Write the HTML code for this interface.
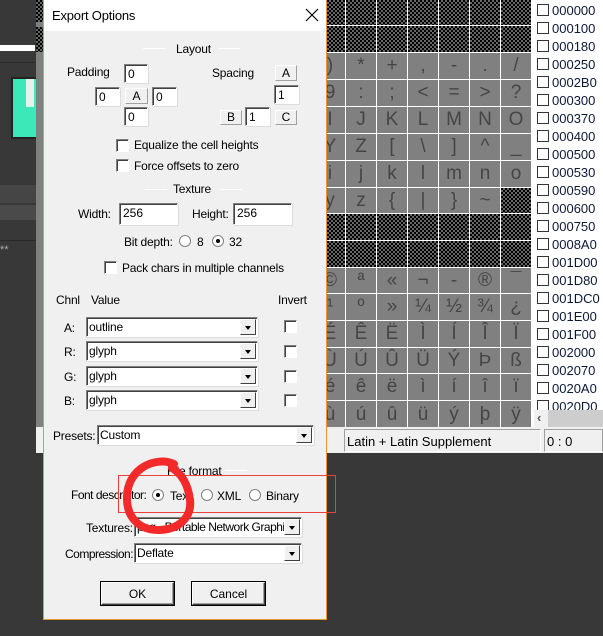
<!DOCTYPE html>
<html><head><meta charset="utf-8"><style>
*{margin:0;padding:0;box-sizing:border-box}
body{width:603px;height:636px;overflow:hidden;background:#383838;position:relative;font-family:"Liberation Sans",Arial,sans-serif;font-size:12px;color:#000}
.a{position:absolute}
.grid{position:absolute;left:315px;top:0;width:219px;height:427px;background:#fff;display:grid;grid-template-columns:repeat(7,30px);column-gap:1px;row-gap:1px;
grid-template-rows:25px 26px 26px 26px 26px 26px 26px 25px 26px 26px 25px 26px 26px 25px 26px 27px}
.grid div{background:#808080;color:#454545;font-size:19px;display:flex;align-items:center;justify-content:center}
.grid div.k,.k{background:#000 repeating-conic-gradient(#666 0 25%,#000 0 50%) 0 0/4px 4px!important}
.list div{position:absolute;left:537px;height:18px;color:#0c1838;font-size:13px}
.list div i{position:absolute;left:0;top:3px;width:12px;height:12px;background:#fff;border:1px solid #333}
.list div span{position:absolute;left:15px;top:2px;white-space:nowrap}
.dlg{position:absolute;left:43px;top:0;width:284px;height:620px;background:#f0f0f0;border:1px solid #e8962e;border-top:none}
.t{position:absolute;white-space:nowrap;letter-spacing:-0.2px}
.in{position:absolute;background:#fff;border:1px solid;border-color:#808080 #fff #fff #808080;box-shadow:inset 1px 1px #404040, 1px 1px #dcdcdc;padding:2px 0 0 3px;font-size:12px}
.lb{position:absolute;border:1px solid;border-color:#fff #a0a0a0 #a0a0a0 #fff;text-align:center;font-size:12px;line-height:13px}
.cb{position:absolute;width:13px;height:13px;background:#fff;border:1px solid;border-color:#808080 #fff #fff #808080;box-shadow:inset 1px 1px #404040}
.rd{position:absolute;width:12px;height:12px;border-radius:50%;background:#fff;border:1px solid #808080}
.rd.on::after{content:"";position:absolute;left:3px;top:3px;width:4px;height:4px;border-radius:50%;background:#000}
.cmb{position:absolute;background:#fff;border:1px solid;border-color:#808080 #fff #fff #808080;box-shadow:inset 1px 1px #404040,1px 1px #dcdcdc;padding:2px 0 0 2px;font-size:12px;overflow:hidden;white-space:nowrap;letter-spacing:-0.2px}
.cmb b{position:absolute;right:1px;top:1px;bottom:1px;width:16px;background:#f0f0f0;border:1px solid;border-color:#fff #404040 #404040 #fff}
.cmb b::after{content:"";position:absolute;left:4px;top:6px;border-left:3.5px solid transparent;border-right:3.5px solid transparent;border-top:4px solid #000}
.ln{position:absolute;height:1px;background:#a0a0a0;border-bottom:1px solid #fff}
.btn{position:absolute;background:#f0f0f0;border:1px solid;border-color:#fff #404040 #404040 #fff;box-shadow:inset -1px -1px #a0a0a0, 0 0 0 1px #000;text-align:center;line-height:22px;font-size:12px}
</style></head><body>
<div class="a" style="left:0;top:45px;width:35px;height:6px;background:#fff"></div>
<div class="a" style="left:0;top:62px;width:35px;height:1px;background:#2a2a2a"></div>
<div class="a" style="left:11px;top:77px;width:25px;height:62px;background:#222"></div>
<div class="a" style="left:13px;top:79px;width:23px;height:58px;background:#3de8b8"></div>
<div class="a" style="left:26px;top:79px;width:8px;height:28px;background:#e8f0ee"></div>
<div class="a" style="left:0;top:185px;width:36px;height:18px;background:#454545"></div>
<div class="a" style="left:0;top:205px;width:36px;height:15px;background:#4a4a4a"></div>
<div class="a" style="left:0;top:240px;width:36px;height:1px;background:#2a2a2a"></div>
<div class="a" style="left:0;top:244px;color:#aaa;font-size:11px">**</div>
<div class="a" style="left:36px;top:0;width:8px;height:453px;background:#808080"></div>
<div class="a k" style="left:36px;top:0;width:8px;height:22px"></div>
<div class="a k" style="left:36px;top:27px;width:8px;height:25px"></div>
<div class="a" style="left:36px;top:427px;width:8px;height:26px;background:#f0f0f0"></div>

<div class="grid">
<div class="k"></div><div class="k"></div><div class="k"></div><div class="k"></div><div class="k"></div><div class="k"></div><div class="k"></div>
<div class="k"></div><div class="k"></div><div class="k"></div><div class="k"></div><div class="k"></div><div class="k"></div><div class="k"></div>
<div>)</div><div>*</div><div>+</div><div>,</div><div>-</div><div>.</div><div>/</div>
<div>9</div><div>:</div><div>;</div><div>&lt;</div><div>=</div><div>&gt;</div><div>?</div>
<div>I</div><div>J</div><div>K</div><div>L</div><div>M</div><div>N</div><div>O</div>
<div>Y</div><div>Z</div><div>[</div><div>\</div><div>]</div><div>^</div><div>_</div>
<div>i</div><div>j</div><div>k</div><div>l</div><div>m</div><div>n</div><div>o</div>
<div>y</div><div>z</div><div>{</div><div>|</div><div>}</div><div>~</div><div class="k"></div>
<div class="k"></div><div class="k"></div><div class="k"></div><div class="k"></div><div class="k"></div><div class="k"></div><div class="k"></div>
<div class="k"></div><div class="k"></div><div class="k"></div><div class="k"></div><div class="k"></div><div class="k"></div><div class="k"></div>
<div>©</div><div>ª</div><div>«</div><div>¬</div><div>-</div><div>®</div><div>¯</div>
<div>¹</div><div>º</div><div>»</div><div>¼</div><div>½</div><div>¾</div><div>¿</div>
<div>É</div><div>Ê</div><div>Ë</div><div>Ì</div><div>Í</div><div>Î</div><div>Ï</div>
<div>Ù</div><div>Ú</div><div>Û</div><div>Ü</div><div>Ý</div><div>Þ</div><div>ß</div>
<div>é</div><div>ê</div><div>ë</div><div>ì</div><div>í</div><div>î</div><div>ï</div>
<div>ù</div><div>ú</div><div>û</div><div>ü</div><div>ý</div><div>þ</div><div>ÿ</div>
</div>
<div class="a" style="left:534px;top:0;width:69px;height:427px;background:#fff"></div>
<div class="list">
<div style="top:1px"><i></i><span>000000</span></div>
<div style="top:19px"><i></i><span>000100</span></div>
<div style="top:37px"><i></i><span>000180</span></div>
<div style="top:55px"><i></i><span>000250</span></div>
<div style="top:73px"><i></i><span>0002B0</span></div>
<div style="top:91px"><i></i><span>000300</span></div>
<div style="top:109px"><i></i><span>000370</span></div>
<div style="top:127px"><i></i><span>000400</span></div>
<div style="top:145px"><i></i><span>000500</span></div>
<div style="top:163px"><i></i><span>000530</span></div>
<div style="top:181px"><i></i><span>000590</span></div>
<div style="top:199px"><i></i><span>000600</span></div>
<div style="top:217px"><i></i><span>000750</span></div>
<div style="top:235px"><i></i><span>0008A0</span></div>
<div style="top:253px"><i></i><span>001D00</span></div>
<div style="top:271px"><i></i><span>001D80</span></div>
<div style="top:289px"><i></i><span>001DC0</span></div>
<div style="top:307px"><i></i><span>001E00</span></div>
<div style="top:325px"><i></i><span>001F00</span></div>
<div style="top:343px"><i></i><span>002000</span></div>
<div style="top:361px"><i></i><span>002070</span></div>
<div style="top:379px"><i></i><span>0020A0</span></div>
<div style="top:397px"><i></i><span>0020D0</span></div>
</div>
<div class="a" style="left:534px;top:410px;width:69px;height:17px;background:#f0f0f0"></div>
<div class="a" style="left:548px;top:410px;width:55px;height:17px;background:#cdcdcd"></div>
<div class="a" style="left:537px;top:410px;font-size:13px;color:#555;font-weight:bold">‹</div>
<div class="a" style="left:327px;top:427px;width:276px;height:26px;background:#f0f0f0"></div>
<div class="a" style="left:344px;top:429px;width:197px;height:23px;border:1px solid #a0a0a0;border-right-color:#fff;border-bottom-color:#fff;padding:4px 0 0 2px;font-size:13px">Latin + Latin Supplement</div>
<div class="a" style="left:544px;top:429px;width:59px;height:23px;border:1px solid #a0a0a0;border-bottom-color:#fff;padding:4px 0 0 2px;font-size:13px">0 : 0</div>

<div class="dlg">
 <div class="a" style="left:0;top:0;width:282px;height:31px;background:#fff"></div>
 <div class="t" style="left:8px;top:8px;font-size:13px">Export Options</div>
 <svg class="a" style="left:261px;top:8px" width="14" height="14"><path d="M1 1L13 13M13 1L1 13" stroke="#000" stroke-width="1.2"/></svg>
</div>
<div class="ln" style="left:143px;top:48px;width:22px"></div><div class="ln" style="left:218px;top:48px;width:22px"></div>
<div class="t" style="left:176px;top:42px">Layout</div>
<div class="t" style="left:67px;top:65px">Padding</div>
<div class="in" style="left:124px;top:64px;width:24px;height:19px">0</div>
<div class="in" style="left:95px;top:87px;width:25px;height:19px">0</div>
<div class="lb" style="left:125px;top:88px;width:23px;height:16px;line-height:14px">A</div>
<div class="in" style="left:152px;top:87px;width:25px;height:19px">0</div>
<div class="in" style="left:124px;top:107px;width:24px;height:19px">0</div>
<div class="t" style="left:212px;top:66px">Spacing</div>
<div class="lb" style="left:275px;top:65px;width:22px;height:16px;line-height:14px">A</div>
<div class="in" style="left:274px;top:85px;width:25px;height:19px">1</div>
<div class="lb" style="left:220px;top:110px;width:22px;height:15px">B</div>
<div class="in" style="left:245px;top:107px;width:25px;height:19px">1</div>
<div class="lb" style="left:275px;top:110px;width:22px;height:15px">C</div>
<div class="cb" style="left:116px;top:139px"></div><div class="t" style="left:134px;top:138px">Equalize the cell heights</div>
<div class="cb" style="left:116px;top:159px"></div><div class="t" style="left:134px;top:159px">Force offsets to zero</div>
<div class="ln" style="left:145px;top:189px;width:22px"></div><div class="ln" style="left:220px;top:189px;width:22px"></div>
<div class="t" style="left:173px;top:182px">Texture</div>
<div class="t" style="left:78px;top:207px">Width:</div>
<div class="in" style="left:119px;top:203px;width:59px;height:22px">256</div>
<div class="t" style="left:192px;top:207px">Height:</div>
<div class="in" style="left:233px;top:203px;width:59px;height:22px">256</div>
<div class="t" style="left:124px;top:235px">Bit depth:</div>
<div class="rd" style="left:179px;top:235px"></div><div class="t" style="left:197px;top:235px">8</div>
<div class="rd on" style="left:212px;top:235px"></div><div class="t" style="left:229px;top:235px">32</div>
<div class="cb" style="left:104px;top:261px"></div><div class="t" style="left:122px;top:261px">Pack chars in multiple channels</div>
<div class="t" style="left:56px;top:293px">Chnl</div><div class="t" style="left:91px;top:293px">Value</div><div class="t" style="left:278px;top:293px">Invert</div>
<div class="t" style="left:64px;top:321px">A:</div><div class="cmb" style="left:86px;top:317px;width:172px;height:20px">outline<b></b></div><div class="cb" style="left:284px;top:320px"></div>
<div class="t" style="left:64px;top:345px">R:</div><div class="cmb" style="left:86px;top:341px;width:172px;height:20px">glyph<b></b></div><div class="cb" style="left:284px;top:345px"></div>
<div class="t" style="left:64px;top:370px">G:</div><div class="cmb" style="left:86px;top:366px;width:172px;height:20px">glyph<b></b></div><div class="cb" style="left:284px;top:370px"></div>
<div class="t" style="left:64px;top:394px">B:</div><div class="cmb" style="left:86px;top:390px;width:172px;height:20px">glyph<b></b></div><div class="cb" style="left:284px;top:394px"></div>
<div class="t" style="left:53px;top:429px">Presets:</div><div class="cmb" style="left:97px;top:425px;width:217px;height:20px">Custom<b></b></div>
<div class="ln" style="left:145px;top:470px;width:8px"></div><div class="ln" style="left:225px;top:470px;width:22px"></div>
<div class="t" style="left:167px;top:464px">File format</div>
<div class="t" style="left:71px;top:488px;letter-spacing:-0.5px">Font descriptor:</div>
<div class="rd on" style="left:152px;top:489px"></div><div class="t" style="left:170px;top:489px">Text</div>
<div class="rd" style="left:201px;top:489px"></div><div class="t" style="left:217px;top:489px">XML</div>
<div class="rd" style="left:249px;top:489px"></div><div class="t" style="left:266px;top:489px">Binary</div>
<div class="t" style="left:86px;top:521px">Textures:</div><div class="cmb" style="left:134px;top:517px;width:168px;height:20px;letter-spacing:-0.5px">png - Portable Network Graphic<b></b></div>
<div class="t" style="left:65px;top:547px;letter-spacing:-0.5px">Compression:</div><div class="cmb" style="left:134px;top:543px;width:168px;height:20px">Deflate<b></b></div>
<div class="btn" style="left:101px;top:582px;width:73px;height:23px">OK</div>
<div class="btn" style="left:192px;top:582px;width:73px;height:23px">Cancel</div>
<div class="a" style="left:118px;top:475px;width:218px;height:38px;border:1px solid #e84040"></div>
<svg class="a" style="left:112px;top:450px" width="90" height="90"><path d="M62 14C44 6 16 18 15 46C14 68 28 80 46 80C66 80 80 68 78 50C76 34 70 24 60 18" fill="none" stroke="#f42a2a" stroke-width="8" stroke-linecap="round"/></svg>
</body></html>
